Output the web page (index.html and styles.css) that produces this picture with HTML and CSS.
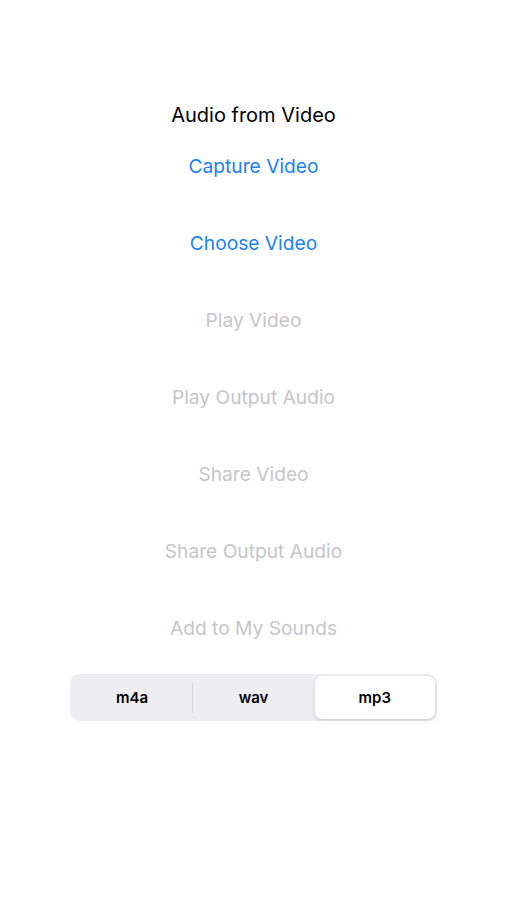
FILE: index.html
```html
<!DOCTYPE html>
<html lang="en">
<head>
    <meta charset="UTF-8">
    <meta name="viewport" content="width=device-width, initial-scale=1.0">
    <title>Audio from Video</title>
    <link rel="stylesheet" href="styles.css">
</head>
<body>
    <div class="screen">
        <h1 class="title">Audio from Video</h1>
        <div class="actions">
            <button class="action active">Capture Video</button>
            <button class="action active">Choose Video</button>
            <button class="action" disabled>Play Video</button>
            <button class="action" disabled>Play Output Audio</button>
            <button class="action" disabled>Share Video</button>
            <button class="action" disabled>Share Output Audio</button>
            <button class="action" disabled>Add to My Sounds</button>
        </div>
        <div class="segments">
            <button class="segment">m4a</button>
            <span class="divider"></span>
            <button class="segment">wav</button>
            <span class="divider hidden"></span>
            <button class="segment selected">mp3</button>
        </div>
    </div>
</body>
</html>
```

FILE: styles.css
```css
body {
    margin: 0;
    background: #ffffff;
    font-family: Inter, "Liberation Sans", sans-serif;
}
.screen {
    display: flex;
    flex-direction: column;
    align-items: center;
    padding-top: 103px;
}
.title {
    margin: 0;
    font-size: 20px;
    font-weight: 400;
    line-height: 24px;
    color: #000000;
}
.actions {
    display: flex;
    flex-direction: column;
    align-items: center;
}
.action {
    height: 77px;
    border: none;
    background: none;
    padding: 0;
    font-family: inherit;
    font-size: 19.2px;
    color: #c6c6c8;
}
.action.active {
    color: #1a82f0;
    cursor: pointer;
}
.segments {
    display: flex;
    align-items: center;
    width: 367px;
    height: 47px;
    margin-top: 8px;
    padding: 2px;
    box-sizing: border-box;
    background: #eeeef0;
    border-radius: 9px;
}
.segment {
    flex: 1;
    height: 100%;
    border: none;
    background: none;
    font-family: inherit;
    font-size: 15px;
    font-weight: 600;
    color: #000000;
    border-radius: 7px;
}
.segment.selected {
    background: #ffffff;
    box-shadow: 0 2px 4px rgba(0, 0, 0, 0.12), 0 0 0 0.5px rgba(0, 0, 0, 0.04);
}
.divider {
    width: 1px;
    height: 30px;
    background: #d6d6d8;
}
.divider.hidden {
    background: transparent;
}
```
